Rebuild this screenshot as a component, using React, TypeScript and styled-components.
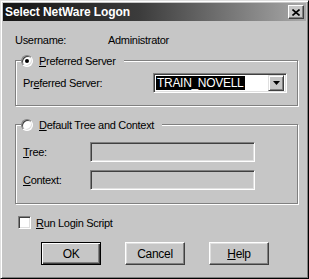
import React from "react";
import styled, { createGlobalStyle } from "styled-components";

const GlobalStyle = createGlobalStyle`
  html, body {
    margin: 0;
    padding: 0;
    background: #c6c6c6;
  }
  body {
    font-family: "Liberation Sans", Arial, sans-serif;
    font-size: 11px;
    color: #000;
  }
`;

const Window = styled.div`
  width: 309px;
  height: 279px;
  box-sizing: border-box;
  background: #c6c6c6;
  border: 1px solid;
  border-color: #dfdfdf #000 #000 #dfdfdf;
  box-shadow: inset 1px 1px 0 #fff, inset -1px -1px 0 #808080;
  padding: 2px;
  display: flex;
  flex-direction: column;
`;

const TitleBar = styled.div`
  height: 18px;
  display: flex;
  align-items: center;
  padding: 0 2px;
  background: linear-gradient(to right, #141414 0%, #3c3c3c 45%, #a8a8a8 100%);
`;

const Title = styled.span`
  color: #fff;
  font-weight: bold;
  font-size: 12px;
  letter-spacing: -0.1px;
`;

const CloseBtn = styled.div`
  margin-left: auto;
  width: 16px;
  height: 14px;
  box-sizing: border-box;
  background: #c6c6c6;
  border: 1px solid;
  border-color: #fff #404040 #404040 #fff;
  box-shadow: inset -1px -1px 0 #808080;
  display: flex;
  align-items: center;
  justify-content: center;
`;

const Body = styled.div`
  padding: 13px 8px 0 12px;
  display: flex;
  flex-direction: column;
  letter-spacing: -0.3px;
`;

const UserRow = styled.div`
  display: flex;
  height: 13px;
  line-height: 13px;
`;

const Label = styled.span<{ $w?: number }>`
  display: inline-block;
  width: ${({ $w }) => ($w ? `${$w}px` : "auto")};
  flex-shrink: 0;
  white-space: nowrap;
`;

const U = styled.span`
  text-decoration: underline;
`;

const Group = styled.fieldset<{ $top: number }>`
  margin: ${({ $top }) => $top}px 0 0;
  padding: 0;
  min-width: 0;
  border: 1px solid #808080;
  box-shadow: 1px 1px 0 #fff, inset 1px 1px 0 #fff;
`;

const Legend = styled.legend`
  margin-left: 5px;
  padding: 0 8px 0 0;
  height: 13px;
  display: flex;
  align-items: center;
  gap: 6px;
  background: #c6c6c6;
`;

const Radio = styled.span<{ $on?: boolean }>`
  position: relative;
  width: 12px;
  height: 12px;
  box-sizing: border-box;
  border-radius: 50%;
  background: #fff;
  border: 1px solid;
  border-color: #808080 #fff #fff #808080;
  box-shadow: inset 1px 1px 0 #404040, inset -1px -1px 0 #dfdfdf;
  &::after {
    content: "";
    display: ${({ $on }) => ($on ? "block" : "none")};
    position: absolute;
    left: 3px;
    top: 3px;
    width: 4px;
    height: 4px;
    border-radius: 50%;
    background: #000;
  }
`;

const GroupInner = styled.div<{ $pad: string }>`
  padding: ${({ $pad }) => $pad};
  display: flex;
  flex-direction: column;
  gap: 8px;
`;

const FieldRow = styled.div`
  display: flex;
  align-items: center;
`;

const Sunken = styled.div<{ $w: number; $white?: boolean }>`
  width: ${({ $w }) => $w}px;
  height: 20px;
  box-sizing: border-box;
  background: ${({ $white }) => ($white ? "#fff" : "#c6c6c6")};
  border: 1px solid;
  border-color: #808080 #fff #fff #808080;
  box-shadow: inset 1px 1px 0 #404040, inset -1px -1px 0 #dfdfdf;
  padding: 2px;
  display: flex;
  align-items: center;
`;

const Selected = styled.span`
  background: #000;
  color: #fff;
  height: 14px;
  line-height: 14px;
  padding: 0 2px 0 1px;
  font-size: 12px;
`;

const DropBtn = styled.div`
  margin-left: auto;
  width: 16px;
  height: 16px;
  box-sizing: border-box;
  background: #c6c6c6;
  border: 1px solid;
  border-color: #dfdfdf #404040 #404040 #dfdfdf;
  box-shadow: inset 1px 1px 0 #fff, inset -1px -1px 0 #808080;
  display: flex;
  align-items: center;
  justify-content: center;
`;

const CheckRow = styled.div`
  margin: 12px 0 0 3px;
  display: flex;
  align-items: center;
  gap: 5px;
`;

const Check = styled.span`
  width: 13px;
  height: 13px;
  box-sizing: border-box;
  background: #fff;
  border: 1px solid;
  border-color: #808080 #fff #fff #808080;
  box-shadow: inset 1px 1px 0 #404040, inset -1px -1px 0 #dfdfdf;
`;

const ButtonRow = styled.div`
  margin: 13px 0 0 26px;
  display: flex;
  gap: 24px;
`;

const Button = styled.div<{ $default?: boolean }>`
  width: 60px;
  height: 23px;
  box-sizing: border-box;
  background: #c6c6c6;
  display: flex;
  align-items: center;
  justify-content: center;
  font-size: 12px;
  border: 1px solid;
  border-color: ${({ $default }) =>
    $default ? "#000" : "#fff #404040 #404040 #fff"};
  box-shadow: ${({ $default }) =>
    $default
      ? "inset 1px 1px 0 #fff, inset -1px -1px 0 #404040, inset -2px -2px 0 #808080"
      : "inset -1px -1px 0 #808080, inset 1px 1px 0 #dfdfdf"};
`;

export default function App() {
  return (
    <>
      <GlobalStyle />
      <Window>
        <TitleBar>
          <Title>Select NetWare Logon</Title>
          <CloseBtn>
            <svg width="8" height="7" viewBox="0 0 8 7">
              <path d="M0.5 0.5 L7.5 6.5 M7.5 0.5 L0.5 6.5" stroke="#000" strokeWidth="1.6" />
            </svg>
          </CloseBtn>
        </TitleBar>
        <Body>
          <UserRow>
            <Label $w={93}>Username:</Label>
            <span>Administrator</span>
          </UserRow>

          <Group $top={7}>
            <Legend>
              <Radio $on />
              <span>
                <U>P</U>referred Server
              </span>
            </Legend>
            <GroupInner $pad="6px 9px 12px 7px">
              <FieldRow>
                <Label $w={130}>
                  Pr<U>e</U>ferred Server:
                </Label>
                <Sunken $w={134} $white>
                  <Selected>TRAIN_NOVELL</Selected>
                  <DropBtn>
                    <svg width="7" height="4" viewBox="0 0 7 4">
                      <path d="M0 0 H7 L3.5 4 Z" fill="#000" />
                    </svg>
                  </DropBtn>
                </Sunken>
              </FieldRow>
            </GroupInner>
          </Group>

          <Group $top={12}>
            <Legend>
              <Radio />
              <span>
                <U>D</U>efault Tree and Context
              </span>
            </Legend>
            <GroupInner $pad="11px 9px 13px 7px">
              <FieldRow>
                <Label $w={67}>
                  <U>T</U>ree:
                </Label>
                <Sunken $w={165} />
              </FieldRow>
              <FieldRow>
                <Label $w={67}>
                  <U>C</U>ontext:
                </Label>
                <Sunken $w={165} />
              </FieldRow>
            </GroupInner>
          </Group>

          <CheckRow>
            <Check />
            <span>
              <U>R</U>un Login Script
            </span>
          </CheckRow>

          <ButtonRow>
            <Button $default>OK</Button>
            <Button>Cancel</Button>
            <Button>
              <span>
                <U>H</U>elp
              </span>
            </Button>
          </ButtonRow>
        </Body>
      </Window>
    </>
  );
}
